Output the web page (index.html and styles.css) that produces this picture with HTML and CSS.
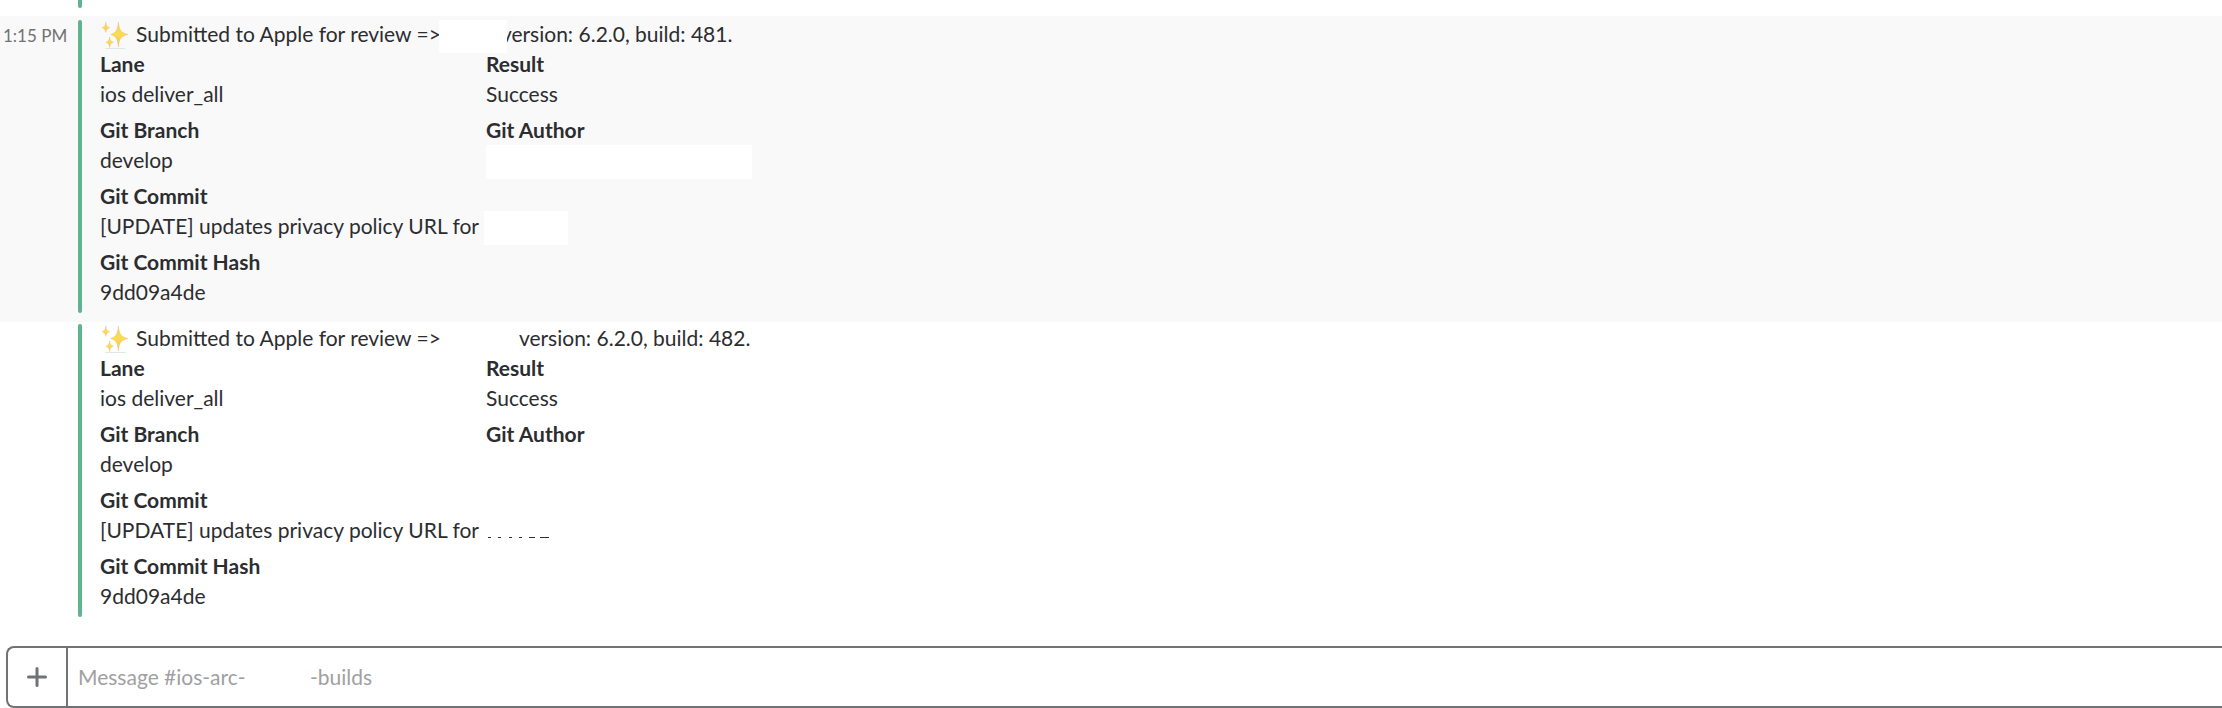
FILE: index.html
```html
<!DOCTYPE html>
<html lang="en">
<head>
<meta charset="utf-8">
<title>Channel messages</title>
<link rel="stylesheet" href="styles.css">
</head>
<body>
<svg width="0" height="0" class="sprite" aria-hidden="true">
  <defs>
    <linearGradient id="gold" x1="0" y1="0" x2="0" y2="1">
      <stop offset="0" stop-color="#efcf70"/>
      <stop offset="0.5" stop-color="#fbdc4e"/>
      <stop offset="1" stop-color="#ecc168"/>
    </linearGradient>
    <symbol id="sparkles" viewBox="0 0 30 30">
      <g fill="url(#gold)" stroke="#e8bd6c" stroke-width="0.4">
        <path d="M18.500 2C19.300 9.500 20.500 13 28.500 15C20.500 17 19.300 20 18.500 28C17.700 20 16.500 17 10.500 15C16.500 13 17.700 9.500 18.500 2Z"/>
        <path d="M5.500 2C6 5.500 6.500 7 9.500 8C6.500 9 6 10 5.500 13C5 10 4.500 9 1.500 8C4.500 7 5 5.500 5.500 2Z"/>
        <path d="M9.500 17.500C10 20.500 10.500 22 13.500 23C10.500 24 10 25 9.500 28.500C9 25 8.500 24 5.500 23C8.500 22 9 20.500 9.500 17.500Z"/>
      </g>
      <path d="M5 29.500H26" stroke="#dce8de" stroke-width="1"/>
    </symbol>
  </defs>
</svg>
<main class="channel">
  <div class="previous"><div class="previous-bar"></div></div>

  <article class="message message-active">
    <time class="time">1:15 PM</time>
    <div class="attachment">
      <p class="summary"><svg class="emoji" role="img" aria-label="sparkles"><use href="#sparkles"/></svg><span>Submitted to Apple for review =&gt;</span><span class="app-name"><span class="mask mask-name"></span></span><span>version: 6.2.0, build: 481.</span></p>
      <dl class="fields">
        <div class="field"><dt>Lane</dt><dd>ios deliver_all</dd></div>
        <div class="field"><dt>Result</dt><dd>Success</dd></div>
        <div class="field"><dt>Git Branch</dt><dd>develop</dd></div>
        <div class="field"><dt>Git Author</dt><dd><span class="mask mask-author"></span></dd></div>
        <div class="field field-wide"><dt>Git Commit</dt><dd>[UPDATE] updates privacy policy URL for <span class="mask mask-commit"></span></dd></div>
        <div class="field field-wide"><dt>Git Commit Hash</dt><dd>9dd09a4de</dd></div>
      </dl>
    </div>
  </article>

  <article class="message">
    <div class="time"></div>
    <div class="attachment">
      <p class="summary"><svg class="emoji" role="img" aria-label="sparkles"><use href="#sparkles"/></svg><span>Submitted to Apple for review =&gt;</span><span class="app-name app-name-long"></span><span>version: 6.2.0, build: 482.</span></p>
      <dl class="fields">
        <div class="field"><dt>Lane</dt><dd>ios deliver_all</dd></div>
        <div class="field"><dt>Result</dt><dd>Success</dd></div>
        <div class="field"><dt>Git Branch</dt><dd>develop</dd></div>
        <div class="field"><dt>Git Author</dt><dd></dd></div>
        <div class="field field-wide"><dt>Git Commit</dt><dd>[UPDATE] updates privacy policy URL for <svg class="remnant" viewBox="0 0 68 2" aria-hidden="true"><path d="M4 1.500h3M14 1.500h3M25 1.500h3M35 1.500h3M45 1.500h6M56 1.500h9" stroke="#2c2d30" stroke-width="1"/></svg></dd></div>
        <div class="field field-wide"><dt>Git Commit Hash</dt><dd>9dd09a4de</dd></div>
      </dl>
    </div>
  </article>

  <form class="composer">
    <button class="add" type="button" aria-label="Add attachment"><svg class="plus" viewBox="0 0 20 20"><path d="M10 1.500V18.500M1.500 10H18.500"/></svg></button>
    <input class="message-input" type="text" aria-label="Message" placeholder="Message #ios-arc-&nbsp;&nbsp;&nbsp;&nbsp;&nbsp;&nbsp;&nbsp;&nbsp;&nbsp;&nbsp;&nbsp;&nbsp;-builds">
  </form>
</main>
</body>
</html>
```
FILE: styles.css
```css
* { box-sizing: border-box; }
body {
  margin: 0;
  background: #fff;
  color: #2c2d30;
  font: 21px/30px Lato, "Open Sans", sans-serif;
  overflow: hidden;
}
p, dl, dd { margin: 0; }
.sprite { position: absolute; }
.previous { height: 16px; padding-left: 78px; }
.previous-bar {
  width: 4px;
  height: 8px;
  background: #5eb48c;
  border-radius: 0 0 2px 2px;
}
.message { display: flex; padding-top: 2px; }
.message-active { padding: 4px 0 9px; background: #f9f9f9; }
.time {
  width: 78px;
  padding-left: 3px;
  font-size: 17px;
  line-height: 32px;
  color: #717274;
}
.attachment {
  position: relative;
  flex: 1;
  padding: 0 0 6px 22px;
}
.attachment::before {
  content: "";
  position: absolute;
  left: 0;
  top: 0;
  bottom: 0;
  width: 4px;
  border-radius: 2px;
  background: #5eb48c;
}
.summary { display: flex; height: 29px; line-height: 28px; }
.emoji { width: 30px; height: 29px; margin-right: 6px; flex: none; }
.app-name { position: relative; width: 60px; }
.app-name-long { width: 78px; }
.mask { display: inline-block; vertical-align: top; background: #fff; }
.mask-name { position: absolute; right: -6px; top: 0; width: 68px; height: 33px; }
.mask-author { width: 266px; height: 34px; }
.mask-commit { width: 84px; height: 34px; }
.fields {
  display: grid;
  grid-template-columns: 386px 1fr;
  row-gap: 6px;
}
.field { height: 60px; }
.field-wide { grid-column: 1 / -1; }
dt { font-weight: 700; }
.remnant { width: 68px; height: 2px; vertical-align: baseline; }
.composer {
  display: flex;
  height: 62px;
  margin: 29px 0 0 6px;
  border: 2px solid #717274;
  border-right: 0;
  border-radius: 8px 0 0 8px;
}
.add {
  display: grid;
  place-items: center;
  width: 60px;
  padding: 0;
  border: 0;
  border-right: 2px solid #717274;
  background: none;
}
.plus {
  width: 20px;
  height: 20px;
  fill: none;
  stroke: #717274;
  stroke-width: 3;
  stroke-linecap: round;
}
.message-input {
  flex: 1;
  min-width: 0;
  padding: 0 10px;
  border: 0;
  outline: 0;
  background: none;
  color: #2c2d30;
  font: inherit;
}
.message-input::placeholder { color: #a0a0a2; opacity: 1; }
```
